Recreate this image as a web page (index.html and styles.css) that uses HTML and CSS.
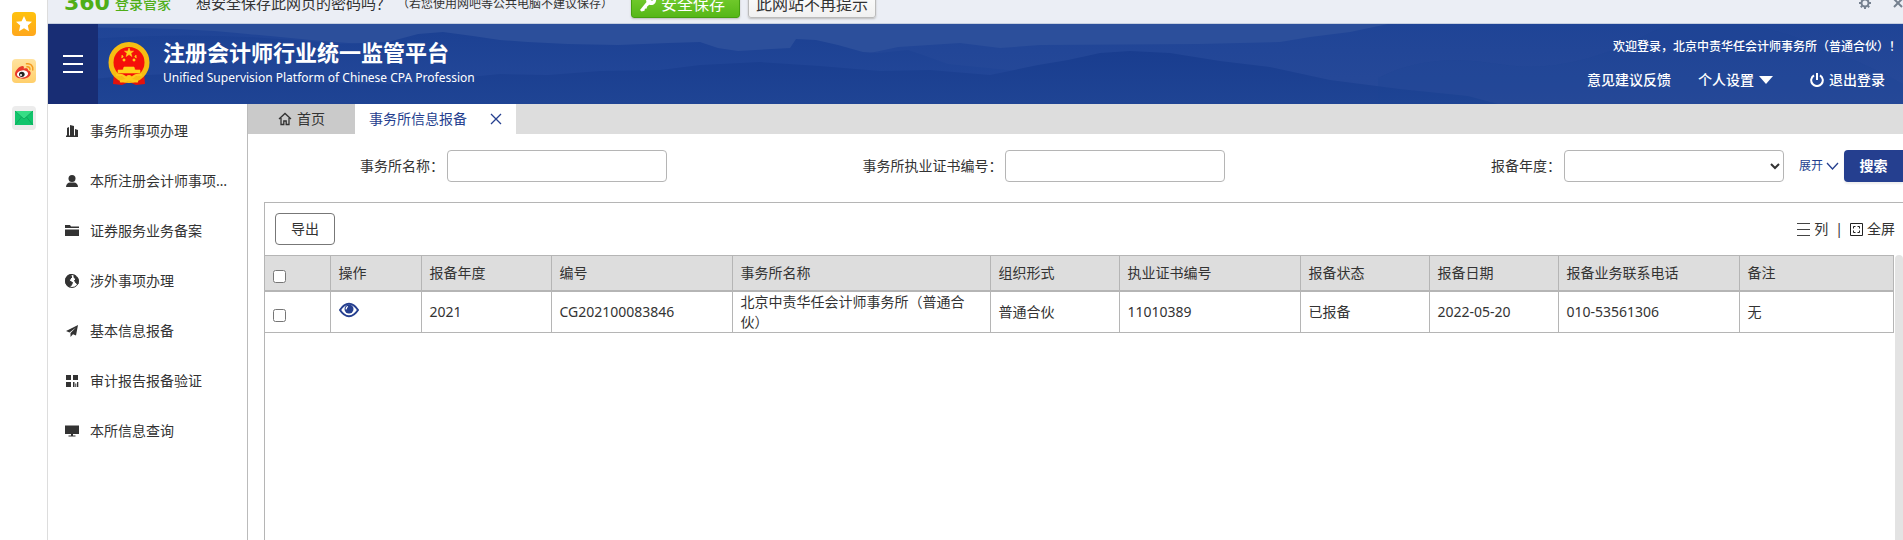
FILE: index.html
```html
<!DOCTYPE html>
<html lang="zh-CN">
<head>
<meta charset="utf-8">
<title>注册会计师行业统一监管平台</title>
<link rel="stylesheet" href="styles.css">
</head>
<body>
<div class="shell">
  <aside class="rail">
    <button class="rail-btn" aria-label="收藏">
      <svg width="24" height="24" viewBox="0 0 24 24"><defs><linearGradient id="gs" x2="0" y2="1"><stop stop-color="#ffc20e"/><stop offset="1" stop-color="#ffa71c"/></linearGradient></defs><rect width="24" height="24" rx="4" fill="url(#gs)"/><path d="M12 4l2.4 5.2 5.6.6-4.200 3.800 1.200 5.600-5-2.900-5 2.900 1.200-5.600L4 9.800l5.600-.6z" fill="#fff"/></svg>
    </button>
    <button class="rail-btn" aria-label="微博">
      <svg width="24" height="24" viewBox="0 0 24 24"><defs><linearGradient id="gw" x2="0" y2="1"><stop stop-color="#ffe3a0"/><stop offset="1" stop-color="#ffcf6b"/></linearGradient></defs><rect width="24" height="24" rx="4" fill="url(#gw)"/><path d="M3 15c0-3.500 4.500-8 7.500-8 1.500 0 1.700 1.400 1.200 2.700 2.300-.9 4.600-.6 4.300 1.500 1.700.5 2.700 1.400 2.700 3 0 3-3.700 5.500-8 5.500S3 18 3 15z" fill="#e8392b"/><ellipse cx="10.500" cy="15" rx="5.600" ry="3.600" fill="#fff" transform="rotate(-8 10.500 15)"/><ellipse cx="9.800" cy="15.300" rx="2.800" ry="2.600" fill="#222"/><circle cx="9" cy="16" r="1" fill="#fff"/><path d="M14.500 4.800c3.800-.8 7 2 6.300 6.200M15 7.800c1.900-.4 3.200 1 2.900 2.700" fill="none" stroke="#f49a1f" stroke-width="1.500" stroke-linecap="round"/></svg>
    </button>
    <button class="rail-btn" aria-label="邮件">
      <svg width="24" height="24" viewBox="0 0 24 24"><rect width="24" height="24" rx="4" fill="#ececec"/><rect x="3" y="5" width="18" height="14" fill="#12c46c"/><path d="M3 5h18l-9 8z" fill="#35dd86"/><path d="M3 5l9 8 9-8M3 19l6.500-8M21 19l-6.500-8" fill="none" stroke="#0aa558" stroke-width=".8"/></svg>
    </button>
  </aside>

  <div class="page">
    <div class="notice">
      <div class="notice-row">
        <span class="brand-num">360</span>
        <span class="brand-name">登录管家</span>
        <span class="question">想安全保存此网页的密码吗？</span>
        <span class="hint">（若您使用网吧等公共电脑不建议保存）</span>
        <button class="save-btn"><svg width="18" height="18" viewBox="0 0 18 18"><path d="M1 16l1.500 1.500 3-.8.4-2 1.800-.3.300-1.700 2.200-2A5 5 0 1 0 7.500 8z" fill="#fff"/><circle cx="13" cy="5" r="1.500" fill="#5dbb1c"/></svg>安全保存</button>
        <button class="never-btn">此网站不再提示</button>
        <button class="notice-icon gear" aria-label="设置"><svg width="12" height="12" viewBox="0 0 12 12"><circle cx="6" cy="6" r="3.500" fill="none" stroke="#75808f" stroke-width="2"/><path d="M6 0v2M6 10v2M0 6h2M10 6h2M1.800 1.800l1.400 1.400M8.800 8.800l1.400 1.400M1.800 10.200l1.400-1.400M8.800 3.200l1.400-1.400" stroke="#75808f" stroke-width="2"/></svg></button>
        <button class="notice-icon" aria-label="关闭"><svg width="10" height="10" viewBox="0 0 10 10"><path d="M1 1l8 8M9 1L1 9" stroke="#75808f" stroke-width="2"/></svg></button>
      </div>
    </div>

    <header class="header">
      <svg class="hills" viewBox="0 0 1855 80" preserveAspectRatio="none" aria-hidden="true">
        <defs>
          <linearGradient id="far" x2="0" y2="1"><stop stop-color="#1f4496"/><stop offset="1" stop-color="#284a99"/></linearGradient>
          <linearGradient id="mid" x2="0" y2="1"><stop stop-color="#1c4193"/><stop offset="1" stop-color="#25499a"/></linearGradient>
          <linearGradient id="near" x2="0" y2="1"><stop stop-color="#193d8f"/><stop offset="1" stop-color="#1f4494"/></linearGradient>
        </defs>
        <path d="M0 4Q120 2 200 10T340 22 480 28 680 27L822 29 850 23 912 19 952 24 992 21 1150 20 1232 18 1262 13 1302 8 1340 0H1855V80H0z" fill="url(#far)"/>
        <path d="M0 18Q150 4 290 20L340 18 370 10 395 8 425 12 452 16 480 18 520 20 570 21 620 19 652 18 670 24 690 27 742 24 748 15 768 16 790 21 815 28 830 29 860 26 875 31 900 40 980 48V80H0z" fill="url(#mid)"/>
        <path d="M0 60Q160 40 250 58L350 60 452 50 500 51 552 47 612 46 652 41 712 38 772 42 832 47 882 46 942 51 990 41 1020 36 1052 29 1082 27 1122 29 1172 37 1222 43 1282 56 1352 65 1420 72 1450 80H0z" fill="url(#near)"/>
        <path d="M1330 54Q1380 28 1450 40T1600 10 1855 60V80H1330z" fill="#1c4292" opacity=".25"/>
      </svg>
      <button class="menu-btn" aria-label="菜单"><svg width="20" height="18" viewBox="0 0 20 18"><path d="M0 1h20M0 9h20M0 17h20" stroke="#fff" stroke-width="2"/></svg></button>
      <svg class="emblem" width="42" height="44" viewBox="0 0 42 44"><path d="M6 30h30l1 12-9 1-7-3-7 3-9-1z" fill="#e3120b"/><circle cx="21" cy="20.500" r="18" fill="#f50f0a" stroke="#f6bd12" stroke-width="5"/><path d="M21 6l1.200 3.200h3.300l-2.600 2 1 3.300-2.900-2-2.900 2 1-3.300-2.600-2h3.300zM14 13l1.300 1.800-1.600 1.200zM28 13l-1.300 1.800 1.600 1.200zM15 17h2v2h-2zM25 17h2v2h-2zM16 25h10l1 3h5v3H10v-3h5z" fill="#ffd21a" stroke="#ffd21a" stroke-width=".6"/><path d="M8 33q6-1 9 2l4 2 4-2q3-3 9-2M12 39q5 1 9-3 4 4 9 3" fill="none" stroke="#ffc91a" stroke-width="2.500"/><circle cx="21" cy="36" r="3" fill="#ffc91a"/></svg>
      <div class="titles">
        <h1>注册会计师行业统一监管平台</h1>
        <p>Unified Supervision Platform of Chinese CPA Profession</p>
      </div>
      <div class="account">
        <p class="welcome">欢迎登录，北京中责华任会计师事务所（普通合伙）！</p>
        <nav class="account-nav">
          <a href="#">意见建议反馈</a>
          <a href="#" class="settings">个人设置<svg width="14" height="8" viewBox="0 0 14 8"><path d="M0 0h14L7 8z" fill="#fff"/></svg></a>
          <a href="#" class="logout"><svg width="14" height="14" viewBox="0 0 14 14"><path d="M4 2.300a5.800 5.800 0 1 0 6 0M7 0v7" fill="none" stroke="#fff" stroke-width="2"/></svg>退出登录</a>
        </nav>
      </div>
    </header>

    <div class="body">
      <nav class="sidebar">
        <a href="#"><svg viewBox="0 0 14 14"><path d="M2 4l2-1v9H2zM5 1l4 1v10H5zM10 5l3 1v6h-3zM1 11.500h12v1.500H1z" fill="#333"/></svg><span>事务所事项办理</span></a>
        <a href="#"><svg viewBox="0 0 14 14"><circle cx="7" cy="4.500" r="3.500" fill="#333"/><path d="M1 13c0-3 2-4.500 4-4.500h4c2 0 4 1.500 4 4.500z" fill="#333"/></svg><span>本所注册会计师事项办理</span></a>
        <a href="#"><svg viewBox="0 0 14 14"><path d="M0 1h5l1 1.500h8V4H0zM0 5.500h14V12H0z" fill="#333"/></svg><span>证券服务业务备案</span></a>
        <a href="#"><svg viewBox="0 0 14 14"><circle cx="7" cy="7" r="6.500" fill="#fff" stroke="#333"/><path d="M1 4C2 1.500 4 .5 7 .5L5.500 2 7 3 5 5l-.5 2 3 1.500-1 2.500-2 2C1 12 0 8 1 4zM9 1l4 4v5L11 9 9.500 6.500 11 5 9 3.500z" fill="#333" stroke="#333"/></svg><span>涉外事项办理</span></a>
        <a href="#"><svg viewBox="0 0 14 14"><path d="M13 1L1 7l3.500 1.500L11 3.500 5.500 9v4L8 10.200l3 1.300z" fill="#333"/></svg><span>基本信息报备</span></a>
        <a href="#"><svg viewBox="0 0 14 14"><path d="M1 1h5v5H1zM8 1h5v5H8zM1 8h5v5H1zM8 8h1.500v5H8zM10.300 9.500h1v3.500h-1zM12 8h1.300v5H12z" fill="#333"/></svg><span>审计报告报备验证</span></a>
        <a href="#"><svg viewBox="0 0 14 14"><path d="M0 1.500h14V10H0zM6 10h2v1.500h2.500v1h-7v-1H6z" fill="#333"/></svg><span>本所信息查询</span></a>
      </nav>

      <main class="main">
        <div class="tabs">
          <a href="#" class="tab home"><svg width="14" height="14" viewBox="0 0 14 14"><path d="M1 7l6-5.500L13 7M3 6v6.500h2.800V9h2.400v3.500H11V6" fill="none" stroke="#333" stroke-width="1.300"/></svg>首页</a>
          <div class="tab active"><a href="#">事务所信息报备</a><button aria-label="关闭标签"><svg width="12" height="12" viewBox="0 0 12 12"><path d="M1 1l10 10M11 1L1 11" stroke="#253f8f" stroke-width="1.300"/></svg></button></div>
        </div>

        <form class="search">
          <div class="fields">
            <div class="field"><label for="firm">事务所名称：</label><input id="firm" type="text"></div>
            <div class="field"><label for="cert">事务所执业证书编号：</label><input id="cert" type="text"></div>
            <div class="field"><label for="year">报备年度：</label><select id="year"><option></option></select></div>
          </div>
          <div class="actions">
            <a href="#" class="expand">展开<svg width="13" height="8" viewBox="0 0 13 8"><path d="M1 1l5.500 6L12 1" fill="none" stroke="#253f8f" stroke-width="1.300"/></svg></a>
            <button type="button" class="search-btn">搜索</button>
          </div>
        </form>

        <section class="panel">
          <div class="toolbar">
            <button class="export-btn">导出</button>
            <div class="tools">
              <button><svg width="13" height="13" viewBox="0 0 13 13"><path d="M0 .5h13M0 6.500h13M0 12.500h13" stroke="#444"/></svg>列</button>
              <span class="divider">|</span>
              <button class="full"><svg width="13" height="13" viewBox="0 0 13 13"><path d="M.5.500h12v12H.5zM3.500 5.500v-2h2M7.500 3.500h2v2M9.500 7.500v2h-2M5.500 9.500h-2v-2" fill="none" stroke="#222"/></svg>全屏</button>
            </div>
          </div>
          <div class="table-area">
            <table>
              <colgroup><col class="c65"><col class="c91"><col class="c130"><col class="c181"><col class="c258"><col class="c129"><col class="c181"><col class="c129"><col class="c129"><col class="c181"><col></colgroup>
              <thead>
                <tr><th><input type="checkbox" aria-label="全选"></th><th>操作</th><th>报备年度</th><th>编号</th><th>事务所名称</th><th>组织形式</th><th>执业证书编号</th><th>报备状态</th><th>报备日期</th><th>报备业务联系电话</th><th>备注</th></tr>
              </thead>
              <tbody>
                <tr><td><input type="checkbox" aria-label="选择此行"></td><td><button class="eye" aria-label="查看"><svg width="20" height="16" viewBox="0 0 20 16"><path d="M1 8q4-6.200 9-6.200T19 8q-4 6.200-9 6.200T1 8z" fill="#fff" stroke="#253f8f" stroke-width="2"/><circle cx="10" cy="7" r="4.500" fill="#253f8f"/><path d="M7.300 7.300A2.500 2.500 0 0 1 9 4.500" fill="none" stroke="#fff" stroke-width="1.200"/></svg></button></td><td>2021</td><td>CG202100083846</td><td>北京中责华任会计师事务所（普通合伙）</td><td>普通合伙</td><td>11010389</td><td>已报备</td><td>2022-05-20</td><td>010-53561306</td><td>无</td></tr>
              </tbody>
            </table>
            <div class="scrollbar"></div>
          </div>
        </section>
      </main>
    </div>
  </div>
</div>
</body>
</html>
```
FILE: styles.css
```css
* { box-sizing: border-box; }
body {
  margin: 0;
  font: 14px/20px "Noto Sans", "Noto Sans CJK SC", sans-serif;
  color: #333;
  background: #fff;
}
button { font: inherit; color: inherit; padding: 0; border: 0; background: none; cursor: pointer; }
a { color: inherit; text-decoration: none; }
h1, p { margin: 0; }
svg { flex: none; display: block; }

.shell { display: flex; height: 100vh; overflow: hidden; }
.rail {
  flex: 0 0 48px;
  display: flex;
  flex-direction: column;
  gap: 23px;
  padding: 12px 11px 0 12px;
  border-right: 1px solid #ddd;
}
.rail-btn { height: 24px; }
.page { flex: 1; min-width: 0; display: flex; flex-direction: column; }

/* password notice, scrolled half out of view */
.notice {
  flex: 0 0 24px;
  display: flex;
  align-items: flex-end;
  overflow: hidden;
  background: #ebeef5;
  border-bottom: 1px solid #c6cfe0;
}
.notice-row {
  flex: 1;
  display: flex;
  align-items: center;
  height: 40px;
  padding-left: 16px;
  font-family: "Noto Sans CJK SC", sans-serif;
  white-space: nowrap;
}
.brand-num { font: bold 22px/20px "DejaVu Sans", sans-serif; color: #4fae17; margin-right: 5px; }
.brand-name { color: #4fae17; font-weight: 500; margin-right: 25px; }
.question { font-size: 15px; margin-right: 6px; }
.hint { font-size: 12px; margin-right: 18px; }
.save-btn, .never-btn { height: 30px; border-radius: 3px; font-size: 16px; box-shadow: 0 1px 2px #bbb; }
.save-btn {
  display: flex;
  align-items: center;
  gap: 4px;
  padding: 0 14px 0 7px;
  border: 1px solid #45a010;
  background: linear-gradient(#7ed336, #56b718);
  color: #fff;
  margin-right: 8px;
}
.never-btn { padding: 0 7px; border: 1px solid #bbb; background: linear-gradient(#fff, #f1f1f1); }
.gear { margin-left: auto; margin-right: 22px; }

.header {
  position: relative;
  flex: 0 0 80px;
  display: flex;
  align-items: center;
  background: #2c4f9b;
  color: #fff;
}
.hills { position: absolute; inset: 0; width: 100%; height: 100%; }
.menu-btn, .emblem, .titles, .account { position: relative; }
.menu-btn { width: 50px; height: 80px; background: #182d74; display: grid; place-items: center; }
.emblem { margin: 0 13px 0 10px; }
.titles { padding-bottom: 2px; white-space: nowrap; }
.titles h1 { font-size: 22px; line-height: 30px; font-weight: 700; }
.titles p { font-size: 12px; line-height: 22px; font-weight: 400; }
.account {
  margin-left: auto;
  display: flex;
  flex-direction: column;
  align-items: flex-end;
  gap: 13px;
  padding-bottom: 1px;
  font-weight: 500;
  white-space: nowrap;
}
.welcome { font-size: 12px; padding-right: 2px; }
.account-nav { display: flex; gap: 27px; padding-right: 18px; }
.account-nav a { display: flex; align-items: center; gap: 5px; }
.logout { margin-left: 10px; }

.body { flex: 1; display: flex; min-height: 0; }
.sidebar { flex: 0 0 200px; min-width: 0; padding-top: 2px; border-right: 1px solid #bbb; }
.sidebar a { display: flex; align-items: center; gap: 11px; height: 50px; padding: 0 16px 0 17px; }
.sidebar svg { width: 14px; height: 14px; }
.sidebar span { overflow: hidden; text-overflow: ellipsis; white-space: nowrap; }

.main { flex: 1; min-width: 0; display: flex; flex-direction: column; }
.tabs { display: flex; flex: 0 0 30px; background: #ddd; }
.tab { display: flex; align-items: center; }
.home { width: 107px; justify-content: center; gap: 5px; background: #cacaca; }
.active { width: 161px; padding: 0 14px; justify-content: space-between; background: #fff; color: #253f8f; }

.search { display: flex; align-items: center; padding: 16px 0 20px; }
.fields { flex: 1; display: grid; grid-template-columns: 3fr 4fr 4fr; }
.field { display: flex; align-items: center; justify-content: flex-end; gap: 3px; white-space: nowrap; }
.field input, .field select {
  width: 220px;
  height: 32px;
  border: 1px solid #b5b5b5;
  border-radius: 4px;
  background: #fff;
  font: inherit;
  color: #333;
}
.actions { display: flex; align-items: center; gap: 5px; padding-left: 15px; }
.expand { display: flex; align-items: center; gap: 3px; font-size: 12px; color: #253f8f; }
.search-btn {
  width: 59px;
  height: 32px;
  border-radius: 4px 0 0 4px;
  background: #253f8f;
  color: #fff;
  font-weight: 700;
  box-shadow: 0 2px 2px #eee;
}

.panel { flex: 1; display: flex; flex-direction: column; margin-left: 16px; border: solid #b5b5b5; border-width: 1px 0 0 1px; }
.toolbar { display: flex; align-items: center; justify-content: space-between; padding: 10px 8px 10px 10px; }
.export-btn { width: 60px; height: 32px; border: 1px solid #777; border-radius: 4px; }
.tools { display: flex; align-items: center; gap: 7px; }
.tools button { display: flex; align-items: center; gap: 4px; }

.table-area { flex: 1; display: flex; align-items: flex-start; gap: 1px; }
table { flex: 1; width: 100%; table-layout: fixed; border-collapse: collapse; border-right: 1px solid #b5b5b5; }
.c65 { width: 65px; }
.c91 { width: 91px; }
.c129 { width: 129px; }
.c130 { width: 130px; }
.c181 { width: 181px; }
.c258 { width: 258px; }
th, td { padding: 0 8px; text-align: left; font-weight: 400; border: 1px solid #b5b5b5; }
th:first-child, td:first-child { border-left: 0; }
th { height: 35px; background: #ddd; border-bottom-width: 2px; }
td { height: 41px; }
table input { display: block; width: 13px; height: 13px; margin: 7px 0 0; }
.eye { display: block; margin-bottom: 4px; }
.scrollbar { flex: 0 0 8px; align-self: stretch; background: #e3e3e3; border-radius: 4px 4px 0 0; }
```
